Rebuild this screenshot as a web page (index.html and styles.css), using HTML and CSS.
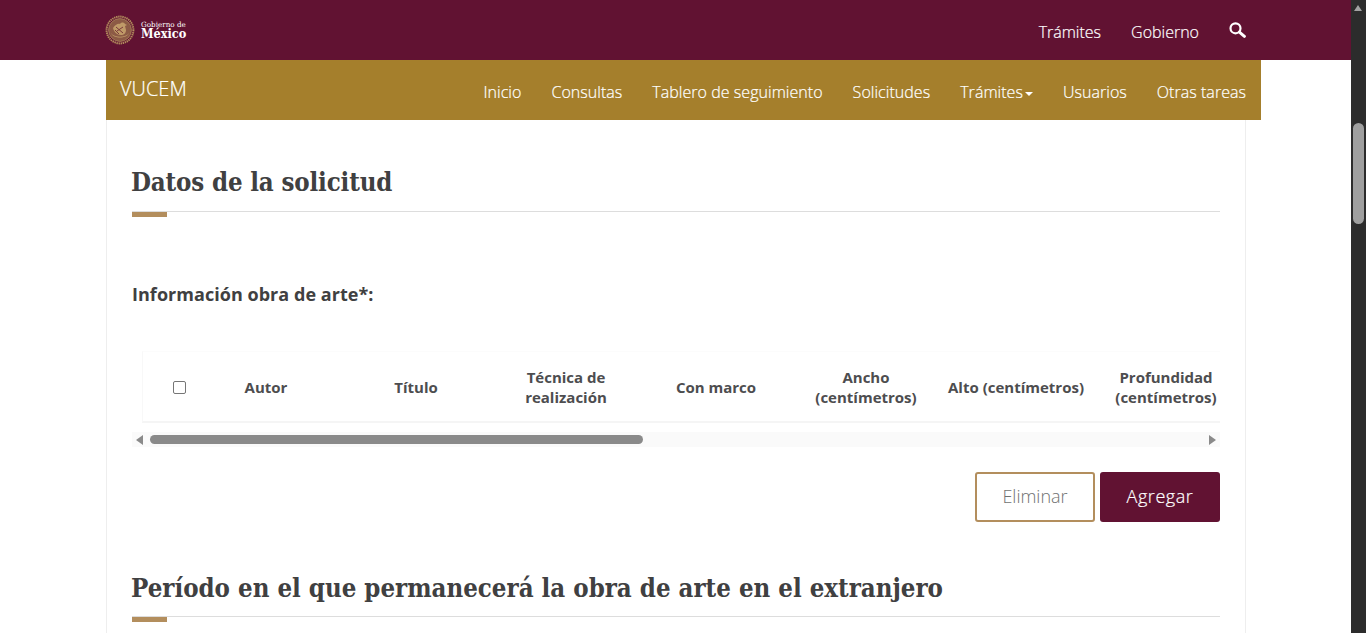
FILE: index.html
```html
<!DOCTYPE html>
<html lang="es">
<head>
<meta charset="utf-8">
<title>VUCEM</title>
<link rel="stylesheet" href="styles.css">
</head>
<body>
<div class="app">
  <div class="page">
    <header class="topbar">
      <div class="topbar-inner">
        <a class="logo">
          <svg class="seal" width="30" height="30" viewBox="0 0 30 30" aria-hidden="true">
            <circle cx="15" cy="15" r="13.4" fill="none" stroke="#b38e5d" stroke-width="2" stroke-dasharray="1.4 .7"/>
            <circle cx="15" cy="15" r="11.4" fill="#8c5a45" stroke="#a9825a" stroke-width=".8"/>
            <path d="M8 13c2-3 5-5 7-4 1-2 4-2 5 0l2 1-2 1 1 4c0 3-2 5-5 5-4 0-7-3-8-7z" fill="#c09a68"/>
            <path d="M6 18c3 5 15 5 18 0-2 6-16 6-18 0z" fill="#c09a68"/>
            <path d="M11 12l7 6M12 16l6-4M10 15l4 4" stroke="#7a3a3a" stroke-width="1"/>
          </svg>
          <span class="logo-text"><span class="logo-small">Gobierno de</span><span class="logo-big">México</span></span>
        </a>
        <nav class="topnav">
          <a>Trámites</a>
          <a>Gobierno</a>
          <svg class="search" width="17" height="16" viewBox="0 0 17 16" aria-hidden="true">
            <circle cx="6.5" cy="6.3" r="5" fill="none" stroke="#fff" stroke-width="2.2"/>
            <path d="M10.4 10.2l5 4.2" stroke="#fff" stroke-width="3" stroke-linecap="round"/>
          </svg>
        </nav>
      </div>
    </header>

    <div class="subnav">
      <span class="brand">VUCEM</span>
      <nav class="subnav-links">
        <a>Inicio</a>
        <a>Consultas</a>
        <a>Tablero de seguimiento</a>
        <a>Solicitudes</a>
        <a>Trámites<i class="caret"></i></a>
        <a>Usuarios</a>
        <a>Otras tareas</a>
      </nav>
    </div>

    <main class="card">
      <h2 class="section-title first">Datos de la solicitud</h2>
      <div class="rule"><span></span></div>

      <p class="field-label">Información obra de arte*:</p>

      <div class="table-wrap">
        <div class="table-head">
          <div class="cell cell-check"><span class="checkbox"></span></div>
          <div class="cell">Autor</div>
          <div class="cell">Título</div>
          <div class="cell">Técnica de realización</div>
          <div class="cell">Con marco</div>
          <div class="cell">Ancho (centímetros)</div>
          <div class="cell">Alto (centímetros)</div>
          <div class="cell">Profundidad (centímetros)</div>
        </div>
      </div>
      <div class="hscroll">
        <i class="arrow arrow-left"></i>
        <div class="hscroll-thumb"></div>
        <i class="arrow arrow-right"></i>
      </div>

      <div class="actions">
        <button class="btn btn-outline">Eliminar</button>
        <button class="btn btn-solid">Agregar</button>
      </div>

      <h2 class="section-title second">Período en el que permanecerá la obra de arte en el extranjero</h2>
      <div class="rule"><span></span></div>
    </main>
  </div>

  <aside class="vscroll">
    <i class="varrow"></i>
    <div class="vthumb"></div>
  </aside>
</div>
</body>
</html>
```

FILE: styles.css
```css
* { box-sizing: border-box; }
html, body { margin: 0; height: 100%; overflow: hidden; background: #fff; }
body { font-family: "Open Sans", "Noto Sans", sans-serif; color: #404041; }

.app { display: flex; height: 633px; }
.page { width: 1351px; flex: none; height: 633px; overflow: hidden; }

.topbar { height: 60px; background: #611232; }
.topbar-inner { display: flex; justify-content: space-between; align-items: center; width: 1155px; margin-left: 106px; height: 60px; padding-right: 15px; }
.logo { display: flex; align-items: center; gap: 6px; margin-left: -1px; }
.seal { display: block; }
.logo-text { display: flex; flex-direction: column; color: #fff; font-family: "DejaVu Serif", serif; }
.logo-small { font-size: 7.2px; line-height: 7px; }
.logo-big { font-family: "DejaVu Serif Condensed", "DejaVu Serif", serif; font-size: 12.6px; line-height: 12px; font-weight: bold; }
.topnav { display: flex; align-items: center; gap: 30px; padding-top: 3px; color: #fff; font-size: 16px; font-weight: 300; -webkit-text-stroke: .2px #fff; }
.search { margin-top: -3px; }

.subnav { display: flex; justify-content: space-between; width: 1155px; height: 60px; margin-left: 106px; padding: 0 15px 0 14px; background: #a57f2c; color: #fff; }
.brand { font-size: 20px; font-weight: 300; line-height: 58px; -webkit-text-stroke: .2px #fff; }
.subnav-links { display: flex; gap: 30px; font-size: 16px; font-weight: 300; letter-spacing: .04px; line-height: 64px; white-space: nowrap; -webkit-text-stroke: .2px #fff; }
.caret { display: inline-block; vertical-align: middle; width: 0; height: 0; margin-left: 2px; border-top: 4px solid #fff; border-left: 4px solid transparent; border-right: 4px solid transparent; }

.card { width: 1140px; height: 513px; margin-left: 106px; padding: 0 25px; border-left: 1px solid #eee; border-right: 1px solid #eee; }

.section-title { margin: 0; padding-top: 44px; height: 82px; font-family: "DejaVu Serif Condensed", "DejaVu Serif", serif; font-size: 25.6px; line-height: 36px; font-weight: bold; color: #404041; white-space: nowrap; }
.section-title.first { letter-spacing: -.15px; margin-left: -1px; }
.section-title.second { padding-top: 0; margin-top: 49px; margin-left: -1px; height: 45px; line-height: 34px; }
.rule { position: relative; height: 1px; background: #ddd; margin-top: 9px; }
.second + .rule { margin-top: 0; }
.rule span { position: absolute; left: 0; top: 1px; width: 35px; height: 5px; background: #b38e5d; }

.field-label { margin: 69px 0 0; font-size: 18px; line-height: 26px; font-weight: 700; letter-spacing: .04px; color: #404041; }

.table-wrap { margin: 44px 0 0 10px; width: 1078px; overflow: hidden; }
.table-head { display: flex; width: 1100px; height: 72px; border-top: 1px solid #fcfcfc; border-left: 1px solid #f8f8f8; border-bottom: 2px solid #f5f5f5; }
.cell { display: flex; align-items: center; justify-content: center; flex: none; width: 150px; padding: 0 4px; text-align: center; font-size: 15px; line-height: 20px; font-weight: 700; color: #4d4d4f; }
.cell-check { width: 48px; padding: 2px 0 0 30px; justify-content: flex-start; }
.checkbox { display: block; width: 13px; height: 13px; background: #fff; border: 1px solid #767676; border-radius: 2px; }

.hscroll { position: relative; height: 15px; margin-top: 9px; background: #fafafa; }
.hscroll-thumb { position: absolute; left: 18px; top: 3px; width: 493px; height: 9px; border-radius: 5px; background: #8a8a8a; }
.arrow { position: absolute; top: 3px; width: 0; height: 0; border-top: 5px solid transparent; border-bottom: 5px solid transparent; }
.arrow-left { left: 4px; border-right: 7px solid #8a8a8a; }
.arrow-right { right: 4px; border-left: 7px solid #8a8a8a; }

.actions { display: flex; justify-content: flex-end; gap: 5px; margin-top: 25px; }
.btn { width: 120px; height: 50px; padding: 0 0 2px; border-radius: 3px; font-family: "Open Sans", sans-serif; font-size: 18px; font-weight: 300; }
.btn-outline { background: #fff; border: 2px solid #b38e5d; color: #6f7271; }
.btn-solid { background: #611232; border: 0; color: #fff; letter-spacing: .55px; -webkit-text-stroke: .2px #fff; }

.vscroll { position: relative; width: 15px; height: 633px; background: #2c2c2c; }
.varrow { position: absolute; left: 3px; top: 5px; width: 0; height: 0; border-left: 4.5px solid transparent; border-right: 4.5px solid transparent; border-bottom: 6px solid #a3a3a3; }
.vthumb { position: absolute; left: 2px; top: 123px; width: 11px; height: 101px; border-radius: 6px; background: #9f9f9f; }
```
